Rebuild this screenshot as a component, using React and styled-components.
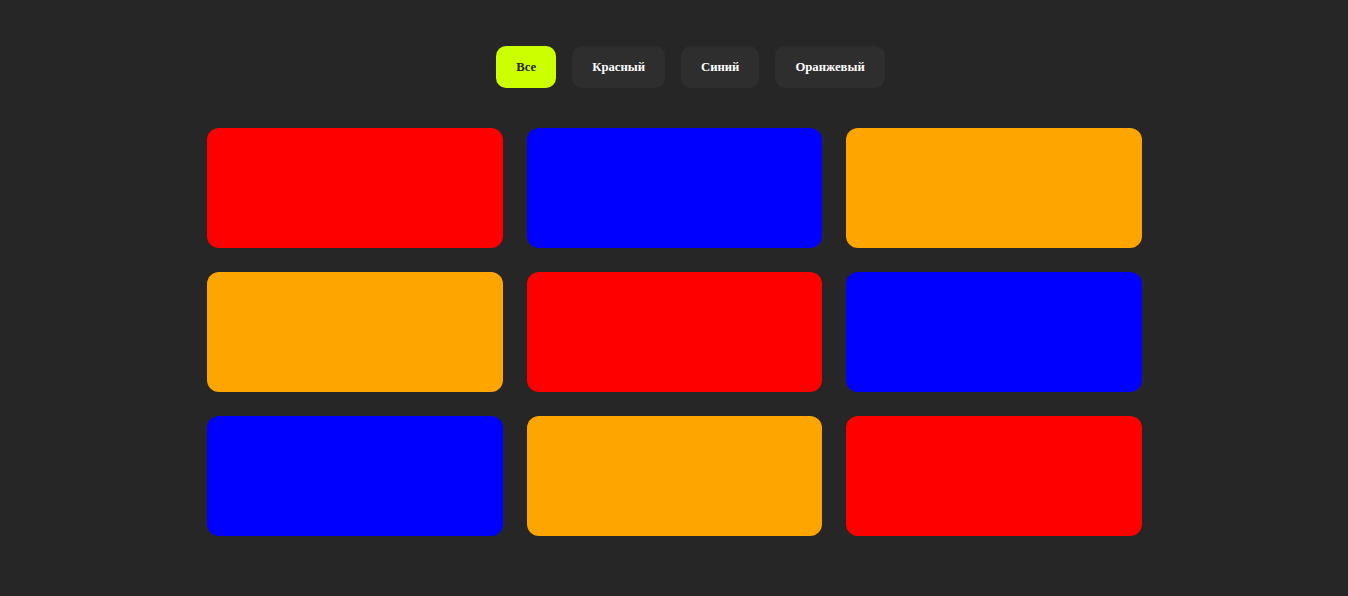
import React, { useState } from 'react';
import styled, { createGlobalStyle } from 'styled-components';

const tiles = ['red', 'blue', 'orange', 'orange', 'red', 'blue', 'blue', 'orange', 'red'];

const filters = [
  { id: 'all', label: 'Все' },
  { id: 'red', label: 'Красный' },
  { id: 'blue', label: 'Синий' },
  { id: 'orange', label: 'Оранжевый' },
];

const App = () => {
  const [active, setActive] = useState('all');
  return (
    <>
      <GlobalStyle />
      <Page>
        <Filters>
          {filters.map((f) => (
            <FilterButton key={f.id} $active={active === f.id} onClick={() => setActive(f.id)}>
              {f.label}
            </FilterButton>
          ))}
        </Filters>
        <Grid>
          {tiles.map((color, i) => (
            <Tile key={i} $color={color} $hidden={active !== 'all' && active !== color} />
          ))}
        </Grid>
      </Page>
    </>
  );
};

const GlobalStyle = createGlobalStyle`
  body {
    margin: 0;
    background: #262626;
    font-family: "Liberation Serif", "Times New Roman", serif;
  }
`;

const Page = styled.div`
  min-height: 596px;
  box-sizing: border-box;
  padding-top: 46px;
  display: flex;
  flex-direction: column;
  align-items: center;
  gap: 40px;
`;

const Filters = styled.div`
  display: flex;
  gap: 16px;
  padding-left: 33px;
`;

const FilterButton = styled.button`
  height: 42px;
  padding: 0 20px;
  border: none;
  border-radius: 10px;
  font-family: "Liberation Serif", "Times New Roman", serif;
  font-weight: 700;
  font-size: 12.7px;
  cursor: pointer;
  background: ${(p) => (p.$active ? '#ccff00' : '#2e2e2e')};
  color: ${(p) => (p.$active ? '#262626' : '#ffffff')};
`;

const Grid = styled.div`
  display: grid;
  grid-template-columns: repeat(3, 295.67px);
  grid-auto-rows: 120px;
  gap: 24px;
  padding-left: 1px;
`;

const Tile = styled.div`
  border-radius: 12px;
  background: ${(p) => p.$color};
  opacity: ${(p) => (p.$hidden ? 0.15 : 1)};
`;

export default App;
